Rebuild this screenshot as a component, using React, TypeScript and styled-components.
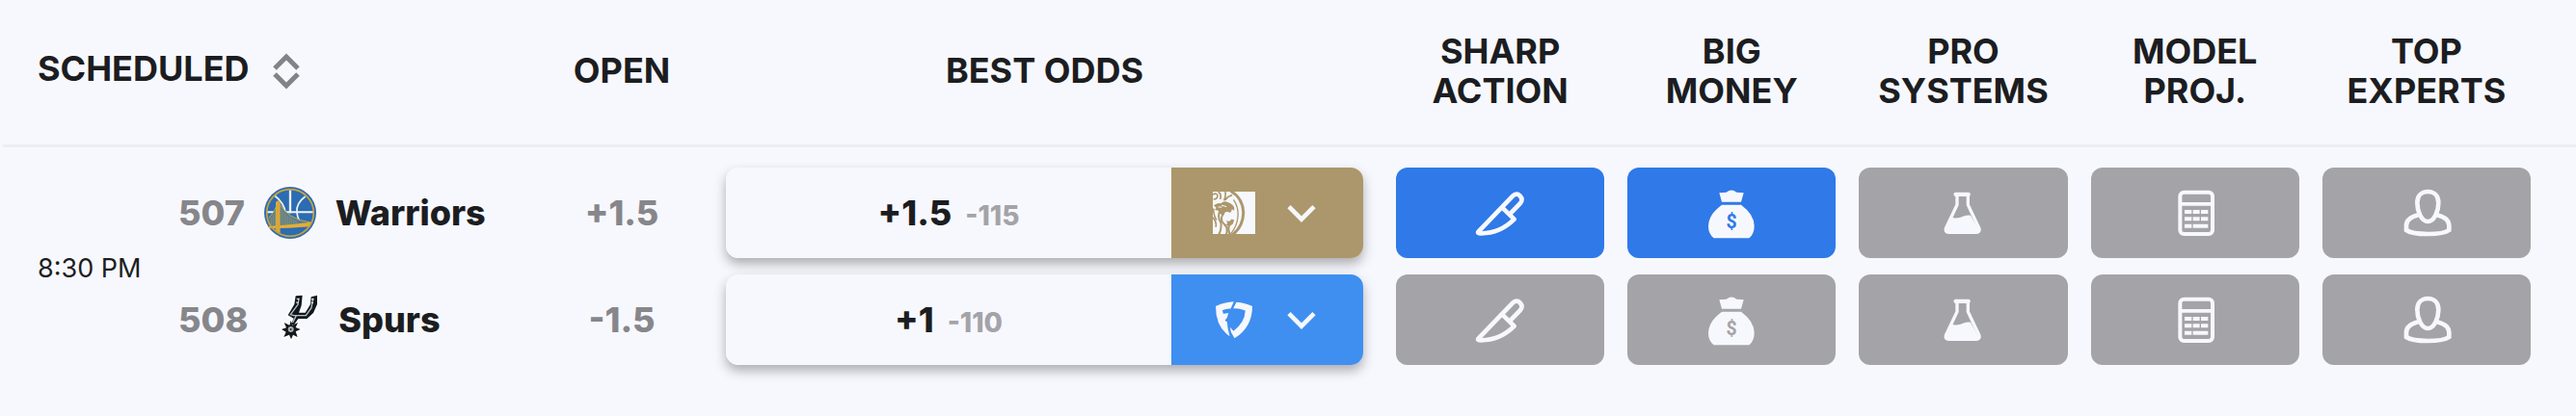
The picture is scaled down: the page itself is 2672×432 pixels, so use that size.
import React from "react";
import styled, { createGlobalStyle } from "styled-components";

const colors = {
  page: "#f7f8fd",
  ink: "#1c1d21",
  muted: "#86868b",
  soft: "#a4a3a8",
  line: "#ecedf2",
  active: "#2f79e8",
};

const GlobalStyle = createGlobalStyle`
  body {
    margin: 0;
    background: ${colors.page};
    color: ${colors.ink};
    font-family: Inter, "Liberation Sans", sans-serif;
  }
  button {
    font: inherit;
    color: inherit;
    border: 0;
    padding: 0;
    background: none;
    cursor: pointer;
  }
  svg {
    display: block;
    flex: none;
  }
`;

const Board = styled.main`
  padding: 0 0 32px 3px;
`;

const OddsTable = styled.table`
  width: 100%;
  min-width: 2200px;
  table-layout: fixed;
  border-collapse: separate;
  border-spacing: 0;
`;

const Col = styled.col<{ $width?: string }>`
  width: ${(p) => p.$width ?? "auto"};
`;

const HeadCell = styled.th<{ $align?: "left" | "center" }>`
  height: 147px;
  padding: 0 ${(p) => (p.$align === "left" ? "36px" : "12px")} 3px;
  border-bottom: 3px solid ${colors.line};
  font-size: 36px;
  font-weight: 700;
  line-height: 41px;
  text-align: ${(p) => p.$align ?? "center"};
  vertical-align: middle;
`;

const SortButton = styled.button`
  display: flex;
  align-items: center;
  gap: 24px;
`;

const SortLabel = styled.span`
  padding-bottom: 4px;
`;

const Row = styled.tr`
  & > td {
    padding-top: 8px;
    padding-bottom: 22px;
  }
  &:first-child > td {
    padding-top: 21px;
    padding-bottom: 9px;
  }
`;

const Cell = styled.td<{ $side?: number }>`
  padding-left: ${(p) => p.$side ?? 0}px;
  padding-right: ${(p) => p.$side ?? 0}px;
  vertical-align: middle;
`;

const TimeCell = styled.td`
  &&& {
    padding: 22px 0 20px 36px;
  }
  font-size: 27px;
  white-space: nowrap;
  vertical-align: middle;
`;

const Team = styled.div`
  display: flex;
  align-items: center;
  gap: 20px;
  font-size: 36px;
  font-weight: 800;
`;

const Muted = styled.span`
  color: ${colors.muted};
`;

const OpenCell = styled(Cell)`
  color: ${colors.muted};
  font-size: 36px;
  font-weight: 800;
  text-align: center;
`;

const OddsCard = styled.div`
  display: flex;
  height: 94px;
  border-radius: 13px;
  overflow: hidden;
  box-shadow: 0 6px 12px rgba(28, 29, 33, 0.34);
`;

const Line = styled.div`
  flex: 1;
  display: flex;
  align-items: center;
  justify-content: center;
  background: ${colors.page};
`;

const Quote = styled.div`
  display: flex;
  align-items: baseline;
  gap: 14px;
  font-size: 36px;
  font-weight: 800;
`;

const Price = styled.span`
  color: ${colors.soft};
  font-size: 28px;
`;

const BookButton = styled.button<{ $color: string }>`
  display: flex;
  align-items: center;
  justify-content: center;
  gap: 28px;
  width: 199px;
  background: ${(p) => p.$color};
`;

const Signal = styled.button<{ $color: string }>`
  display: flex;
  align-items: center;
  justify-content: center;
  width: 100%;
  height: 94px;
  border-radius: 12px;
  background: ${(p) => p.$color};
`;

const SortIcon = () => (
  <svg width="28" height="38" viewBox="0 0 28 38" fill="none" stroke="#828287" strokeWidth="5" aria-hidden="true">
    <path d="M2 16 14 4l12 12M2 22l12 12 12-12" />
  </svg>
);

const Chevron = () => (
  <svg width="40" height="40" viewBox="360 91 120 120" fill="none" stroke={colors.page} strokeWidth="14" aria-hidden="true">
    <path d="M381 132l39 39 39-39" />
  </svg>
);

const WarriorsLogo = () => (
  <svg width="54" height="54" viewBox="46 40 162 162" fill="none" aria-hidden="true">
    <circle cx="127" cy="121" r="81" fill="#2b6cb2" />
    <g stroke="#eef3f8" strokeWidth="6">
      <path d="M127 50v72" strokeWidth="7" />
      <path d="M54 119h148" />
      <path d="M78 67q30 22 35 56M174 70q-30 22-26 50 1 14 8 26" strokeWidth="5" />
    </g>
    <path d="M60 137q21-20 29-52 26 56 102 66v8H60z" fill="#557f95" />
    <path d="M68 136v24M74 128v32M80 114v46M101 112v46M107 119v39M113 125v33M119 130v28M125 134v24M131 137v20M138 141v15M145 144v12" stroke="#a39a62" strokeWidth="2" />
    <path d="M60 137q21-20 29-52 26 56 102 66" stroke="#c9a547" strokeWidth="3" />
    <path d="M60 162q65-3 132-12l-3 14q-64 6-127 6z" fill="#e5ae35" />
    <path d="M82 88l7-6 7 6v96l-14-6z" fill="#d9a738" />
    <circle cx="127" cy="121" r="73" stroke="#c9a23c" strokeWidth="5" />
  </svg>
);

const SpursLogo = () => (
  <svg width="54" height="54" viewBox="46 375 162 162" fill="none" aria-hidden="true">
    <g stroke="#ffffff" strokeWidth="12" strokeLinejoin="round">
      <path d="M135 382l21-2-3 32-8 22 20 0 16-26 2-23 19-5v28l-12 27-20 18h-27l-14 20-8-4 8-17-18-10 20-34z" />
      <path d="M120 459l5 14 17-8-7 15 15 6-15 7 6 17-14-7-6 14-6-14-17 7 7-16-14-8 15-5-7-16 17 8z" />
    </g>
    <path d="M135 382l21-2-3 32-8 22 20 0 16-26 2-23 19-5v28l-12 27-20 18h-27l-14 20-8-4 8-17-18-10 20-34z" fill="#10191f" />
    <path d="M145 389l-3 20-23 31 10 3h38l17-24 5-30M137 443l-11 22" stroke="#b9c0c4" strokeWidth="4" />
    <path d="M138 391l8 1M136 402l7 1M184 392l8 1M183 403l7 1" stroke="#e9edef" strokeWidth="3" />
    <path d="M120 459l5 14 17-8-7 15 15 6-15 7 6 17-14-7-6 14-6-14-17 7 7-16-14-8 15-5-7-16 17 8z" fill="#14191d" />
    <circle cx="120" cy="486" r="9" fill="#8f979b" />
    <path d="M120 478v16M112 486h16M114 480l12 12M126 480l-12 12" stroke="#dde1e3" strokeWidth="2" />
    <circle cx="120" cy="486" r="3" fill="#14191d" />
  </svg>
);

const LionLogo = () => (
  <svg width="44" height="44" viewBox="143 85 133 133" fill="none" aria-hidden="true">
    <path d="M143 85h133v133H143z" fill={colors.page} />
    <g stroke="#ab976b">
      <path d="M199 83q39 23 40 68-1 45-34 69" strokeWidth="9" />
      <path d="M182 85q3 14-4 28M143 94q12-6 15 3 0 12-13 12M160 85q12 8 6 24M204 96q-16 4-22 16" strokeWidth="5" />
      <path d="M208 110q18 26 13 58-3 26-22 50" strokeWidth="4" />
      <path d="M166 144q-10 20 2 38 4 18-6 38M178 152q-16 20 0 34 14 12 7 34" strokeWidth="6" />
      <path d="M145 138q0 24 10 36M143 166q14 16 9 30" strokeWidth="5" />
      <path d="M196 188q-8 12 0 30" strokeWidth="7" />
    </g>
    <path d="M146 128q12-8 22-6 10-10 24-3 14 5 18 16v10l-7-5q-3 16-14 8-10 1-14 11l-11-5-4-9-12-3q8-5 4-8zM184 174q10 9 18-3l8 3-4 12q-10 10-22 3l5-5z" fill="#ab976b" />
    <path d="M170 128l16 4M160 133l11 1" stroke={colors.page} strokeWidth="3" />
  </svg>
);

const ShieldLogo = () => (
  <svg width="44" height="44" viewBox="143 418 133 133" fill={colors.page} aria-hidden="true">
    <path d="M152 442q26-12 57-14l-10 22q-15 0-26 5l3 11 16-3-4 15-7 9 7 5 2 19 6 26q-44-30-44-95z" />
    <path d="M217 429q28 2 50 13 0 66-56 101l-11-20-3-15 11 12q35-26 37-64-20-8-38-7z" />
  </svg>
);

type IconProps = { hole: string };

const KnifeIcon = () => (
  <svg width="60" height="60" viewBox="75 31 180 180" fill="none" stroke={colors.page} strokeWidth="14" strokeLinejoin="round" aria-hidden="true">
    <path d="M98 179L204 69q12-12 23-1 11 12 0 24l-29 30M171 104l38 37q-44 44-103 44-14 0-8-6" />
  </svg>
);

const MoneyIcon = ({ hole }: IconProps) => (
  <svg width="60" height="60" viewBox="75 31 180 180" fill={colors.page} aria-hidden="true">
    <path d="M127 59q12-1 22-2 16-13 32 0l22 2-8 28h-60zM135 96h60q41 30 41 66 0 24-16 38H110q-17-14-17-38 1-36 42-66z" />
    <text x="165" y="170" textAnchor="middle" fontFamily="Roboto, sans-serif" fontSize="58" fontWeight="700" fill={hole}>$</text>
  </svg>
);

const FlaskIcon = () => (
  <svg width="60" height="60" viewBox="76 31 180 180" fill="none" aria-hidden="true">
    <rect x="138" y="57" width="51" height="13" rx="5" fill={colors.page} />
    <path d="M148 66v30l-34 72q-5 14 9 14h84q14 0 9-14l-34-72V66" stroke={colors.page} strokeWidth="10" />
    <path d="M132 136q16 4 32-3 14-5 26-4l27 48-6 8h-92l-6-8z" fill={colors.page} />
  </svg>
);

const CalculatorIcon = () => (
  <svg width="60" height="60" viewBox="80 31 180 180" fill={colors.page} aria-hidden="true">
    <rect x="123" y="57" width="101" height="130" rx="12" fill="none" stroke={colors.page} strokeWidth="12" />
    <path d="M123 88h100v11H123z" />
    <path d="M137 112h22v12h-22zM163 112h21v12h-21zM188 112h22v12h-22zM137 134h22v12h-22zM163 134h21v12h-21zM188 134h22v12h-22zM137 156h22v12h-22zM163 156h47v12h-47z" />
  </svg>
);

const ExpertIcon = () => (
  <svg width="60" height="60" viewBox="81 31 180 180" fill="none" stroke={colors.page} strokeWidth="14" aria-hidden="true">
    <path d="M175 55c20 0 33 13 33 35 0 25-13 58-33 58s-33-33-33-58c0-22 13-35 33-35z" />
    <path d="M145 128q-37 10-37 32v15q17 12 67 12t66-12v-15q0-22-37-32" />
  </svg>
);

const signals = [
  { head: ["SHARP", "ACTION"], Icon: KnifeIcon },
  { head: ["BIG", "MONEY"], Icon: MoneyIcon },
  { head: ["PRO", "SYSTEMS"], Icon: FlaskIcon },
  { head: ["MODEL", "PROJ."], Icon: CalculatorIcon },
  { head: ["TOP", "EXPERTS"], Icon: ExpertIcon },
];

const teams = [
  {
    number: "507",
    name: "Warriors",
    Logo: WarriorsLogo,
    open: "+1.5",
    line: "+1.5",
    price: "-115",
    book: { name: "BetMGM", color: "#ab976b", Logo: LionLogo },
    active: [true, true, false, false, false],
  },
  {
    number: "508",
    name: "Spurs",
    Logo: SpursLogo,
    open: "-1.5",
    line: "+1",
    price: "-110",
    book: { name: "FanDuel", color: "#3f8ff0", Logo: ShieldLogo },
    active: [false, false, false, false, false],
  },
];

export default function App() {
  return (
    <Board>
      <GlobalStyle />
      <OddsTable>
        <colgroup>
          <Col $width="182px" />
          <Col $width="374px" />
          <Col $width="172px" />
          <Col />
          {signals.map((s) => (
            <Col key={s.head[0]} $width="9%" />
          ))}
          <Col $width="35px" />
        </colgroup>
        <thead>
          <tr>
            <HeadCell colSpan={2} $align="left" scope="col">
              <SortButton type="button">
                <SortLabel>SCHEDULED</SortLabel>
                <SortIcon />
              </SortButton>
            </HeadCell>
            <HeadCell scope="col">OPEN</HeadCell>
            <HeadCell scope="col">BEST ODDS</HeadCell>
            {signals.map((s) => (
              <HeadCell key={s.head[0]} scope="col">
                {s.head[0]}
                <br />
                {s.head[1]}
              </HeadCell>
            ))}
            <HeadCell as="td" />
          </tr>
        </thead>
        <tbody>
          {teams.map((team, i) => (
            <Row key={team.number}>
              {i === 0 && <TimeCell rowSpan={2}>8:30 PM</TimeCell>}
              <Cell>
                <Team>
                  <Muted>{team.number}</Muted>
                  <team.Logo />
                  <span>{team.name}</span>
                </Team>
              </Cell>
              <OpenCell>{team.open}</OpenCell>
              <Cell $side={22}>
                <OddsCard>
                  <Line>
                    <Quote>
                      <span>{team.line}</span>
                      <Price>{team.price}</Price>
                    </Quote>
                  </Line>
                  <BookButton type="button" $color={team.book.color} aria-label={`${team.book.name}, choose sportsbook`}>
                    <team.book.Logo />
                    <Chevron />
                  </BookButton>
                </OddsCard>
              </Cell>
              {signals.map(({ head, Icon }, n) => {
                const color = team.active[n] ? colors.active : colors.soft;
                return (
                  <Cell key={head[0]} $side={12}>
                    <Signal type="button" $color={color} aria-label={`${team.name} ${head.join(" ")}`}>
                      <Icon hole={color} />
                    </Signal>
                  </Cell>
                );
              })}
              <Cell />
            </Row>
          ))}
        </tbody>
      </OddsTable>
    </Board>
  );
}
